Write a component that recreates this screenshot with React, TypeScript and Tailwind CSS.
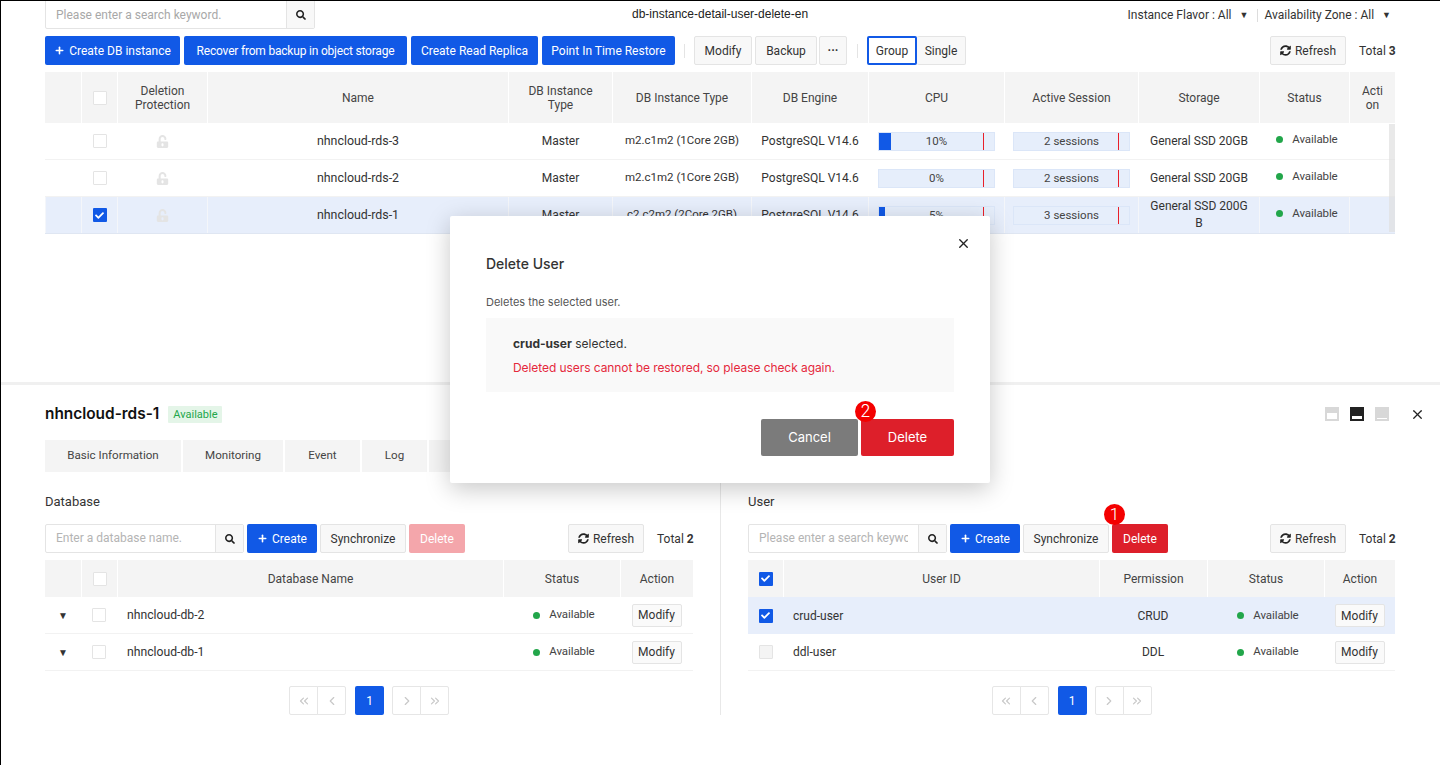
import { ChevronLeft, ChevronRight, ChevronsLeft, ChevronsRight, Plus, X } from "lucide-react";
import { FaCheck, FaSearch, FaSyncAlt, FaUnlockAlt } from "react-icons/fa";

function Btn({ children, className = "" }: any) {
  return (
    <button className={"flex h-[29px] items-center justify-center rounded-[2px] border border-[#e4e4e4] bg-[#f8f8f8] text-[12px] text-[#333] " + className}>
      {children}
    </button>
  );
}

function Blue({ children, className = "" }: any) {
  return (
    <button className={"flex h-[29px] items-center justify-center rounded-[2px] bg-[#1159e6] text-[12px] text-white " + className}>
      {children}
    </button>
  );
}

function Box({ on = false, dim = false }: any) {
  if (on) {
    return (
      <span className="flex h-[14px] w-[14px] items-center justify-center rounded-[1px] bg-[#1159e6]">
        <FaCheck size={9} className="text-white" />
      </span>
    );
  }
  return <span className={"block h-[14px] w-[14px] rounded-[1px] border border-[#e4e4e4] " + (dim ? "bg-[#f4f4f4]" : "bg-white")} />;
}

function Status({ className = "" }: any) {
  return (
    <span className={"flex items-center gap-[9px] pl-[5px] text-[11.5px] tracking-[-0.1px] text-[#444] " + className}>
      <span className="h-[7px] w-[7px] rounded-full bg-[#22a64a]" />
      Available
    </span>
  );
}

function Bar({ label, pct }: any) {
  return (
    <div className="relative mt-px flex h-[19px] w-[117px] items-center justify-center border border-[#dbe6f8] bg-[#e6eefb] text-[11.5px] text-[#444]">
      <div className="absolute bottom-0 left-0 top-0 bg-[#1159e6]" style={{ width: pct + "%" }} />
      <div className="absolute bottom-0 left-[104px] top-0 w-px bg-[#e8202a]" />
      <span className="relative">{label}</span>
    </div>
  );
}

const topCols = "grid-cols-[36px_36px_90px_301px_104px_139px_117px_136px_134px_121px_90px_46px]";

function InstanceRow({ name, flavor, cpu, pct, sessions, storage, selected }: any) {
  const cell = "flex h-full items-center justify-center border-l " + (selected ? "border-[#f4f6fa]" : "border-transparent");
  return (
    <div className={"grid h-[37px] items-center border-b text-[12px] text-[#333] " + topCols + " " + (selected ? "border-[#dfe6f2] bg-[#e7eefb]" : "border-[#f2f2f2]")}>
      <div className={cell} />
      <div className={cell}><Box on={selected} /></div>
      <div className={cell}><FaUnlockAlt size={13} className="text-[#e4e4e4]" /></div>
      <div className={cell + " text-[12.4px]"}>{name}</div>
      <div className={cell}>Master</div>
      <div className={cell + " text-[11.5px]"}>{flavor}</div>
      <div className={cell}>PostgreSQL V14.6</div>
      <div className={cell}><Bar label={cpu} pct={pct} /></div>
      <div className={cell}><Bar label={sessions} pct={0} /></div>
      <div className={cell + " text-center leading-[17px]"}>{storage}</div>
      <div className={cell}><Status className="-mt-[3px]" /></div>
      <div className={cell} />
    </div>
  );
}

function Pager() {
  const item = "flex h-[29px] w-[29px] items-center justify-center border border-[#e6e6e6] text-[#c8c8c8]";
  return (
    <div className="mt-[15px] flex justify-center">
      <div className="flex">
        <span className={item + " rounded-l-[2px]"}><ChevronsLeft size={14} /></span>
        <span className={item + " -ml-px rounded-r-[2px]"}><ChevronLeft size={14} /></span>
      </div>
      <span className="ml-[9px] mr-[8px] flex h-[29px] w-[29px] items-center justify-center rounded-[2px] bg-[#1159e6] text-[12px] text-white">1</span>
      <div className="flex">
        <span className={item + " rounded-l-[2px]"}><ChevronRight size={14} /></span>
        <span className={item + " -ml-px rounded-r-[2px]"}><ChevronsRight size={14} /></span>
      </div>
    </div>
  );
}

function SearchBox({ placeholder, width }: any) {
  return (
    <div className={"flex h-[29px] rounded-[2px] border border-[#e4e4e4] " + width}>
      <span className="min-w-0 flex-1 pl-[10px] pr-[10px]">
        <span className="block overflow-hidden whitespace-nowrap text-[12px] leading-[27px] text-[#b4b4b4]">{placeholder}</span>
      </span>
      <span className="flex w-[28px] items-center justify-center border-l border-[#e4e4e4] bg-[#f8f8f8]">
        <FaSearch size={10} className="text-[#222]" />
      </span>
    </div>
  );
}

function Refresh() {
  return (
    <Btn className="ml-auto w-[76px]"><FaSyncAlt size={11} className="mr-[4px] text-[#222]" />Refresh</Btn>
  );
}

function Toolbar({ placeholder, deleteClass, children }: any) {
  return (
    <div className="flex items-center">
      <SearchBox placeholder={placeholder} width="w-[199px]" />
      <Blue className="ml-[3px] w-[70px]"><Plus size={11} strokeWidth={3.5} className="mr-[4px]" />Create</Blue>
      <Btn className="ml-[3px] w-[86px]">Synchronize</Btn>
      <button className={"relative ml-[3px] h-[29px] w-[56px] rounded-[2px] text-[12px] text-white " + deleteClass}>
        Delete
        {children}
      </button>
      <Refresh />
      <span className="ml-[13px] w-[36px] whitespace-nowrap text-right text-[12px] text-[#333]">Total <b>2</b></span>
    </div>
  );
}

function Marker({ n, className }: any) {
  return (
    <span className={"absolute flex h-[21px] w-[21px] items-center justify-center rounded-full bg-[#f40000] text-[17px] font-light text-white " + className}>{n}</span>
  );
}

function Modify() {
  return (
    <button className="h-[23px] w-[50px] rounded-[2px] border border-[#e4e4e4] bg-[#fafafa] text-[12px] text-[#333]">Modify</button>
  );
}

function Head({ children, className = "" }: any) {
  return <div className={"flex h-full items-center justify-center border-l border-white bg-[#f4f4f4] text-center text-[12px] leading-[14px] text-[#444] " + className}>{children}</div>;
}

function Tile({ tile, inner }: any) {
  return (
    <span className={"flex h-[14px] w-[14px] flex-col justify-end px-[2px] pb-[2px] " + tile}>
      <span className={"block bg-white " + inner} />
    </span>
  );
}

const dbCols = "grid-cols-[36px_36px_386px_117px_73px]";
const userCols = "grid-cols-[35px_316px_108px_117px_71px]";

export default function App() {
  return (
    <div className="relative h-[765px] w-[1440px] overflow-hidden border-l border-t border-black bg-white font-['Roboto',sans-serif]">
      {/* top list */}
      <div className="h-[381px] pl-[44px] pr-[45px]">
        <div className="flex h-[28px] items-start">
          <div className="-mt-px flex h-[29px] w-[270px] rounded-b-[2px] border border-[#e4e4e4]">
            <span className="flex-1 pl-[10px] text-[12px] leading-[29px] text-[#a8a8a8]">Please enter a search keyword.</span>
            <span className="flex w-[28px] items-center justify-center border-l border-[#e4e4e4] bg-[#f8f8f8]">
              <FaSearch size={10} className="text-[#222]" />
            </span>
          </div>
          <span className="ml-[317px] font-['Liberation_Sans',sans-serif] text-[12px] leading-[27px] text-[#222]">db-instance-detail-user-delete-en</span>
          <div className="ml-auto flex items-center text-[12px] leading-[29px] text-[#333]">
            <span>Instance Flavor : All</span>
            <span className="ml-[8px] text-[9px]">▼</span>
            <span className="ml-[9px] mr-[6px] h-[13px] w-px bg-[#ddd]" />
            <span>Availability Zone : All</span>
            <span className="ml-[8px] mr-[4px] text-[9px]">▼</span>
          </div>
        </div>

        <div className="mt-[7px] flex items-center">
          <Blue className="w-[135px]"><Plus size={11} strokeWidth={3.5} className="mr-[4px]" />Create DB instance</Blue>
          <Blue className="ml-[4px] w-[223px] tracking-[-0.2px]">Recover from backup in object storage</Blue>
          <Blue className="ml-[4px] w-[127px]">Create Read Replica</Blue>
          <Blue className="ml-[4px] w-[133px]">Point In Time Restore</Blue>
          <span className="mx-[9px] h-[14px] w-px bg-[#e4e4e4]" />
          <Btn className="w-[58px]">Modify</Btn>
          <Btn className="ml-[3px] w-[62px]">Backup</Btn>
          <Btn className="ml-[2px] w-[28px] font-bold">···</Btn>
          <span className="ml-[10px] mr-[9px] h-[14px] w-px bg-[#e4e4e4]" />
          <button className="h-[29px] w-[50px] rounded-[2px] border-2 border-[#1159e6] text-[12px] text-[#333]">Group</button>
          <Btn className="w-[49px] border-l-0">Single</Btn>
          <Refresh />
          <span className="ml-[13px] w-[36px] whitespace-nowrap text-right text-[12px] text-[#333]">Total <b>3</b></span>
        </div>

        <div className="relative mt-[7px]">
          <div className={"grid h-[51px] items-center " + topCols}>
            <Head className="border-l-0" />
            <Head><Box /></Head>
            <Head>Deletion<br />Protection</Head>
            <Head>Name</Head>
            <Head>DB Instance<br />Type</Head>
            <Head>DB Instance Type</Head>
            <Head>DB Engine</Head>
            <Head>CPU</Head>
            <Head>Active Session</Head>
            <Head>Storage</Head>
            <Head>Status</Head>
            <Head>Acti<br />on</Head>
          </div>
          <InstanceRow name="nhncloud-rds-3" flavor="m2.c1m2 (1Core 2GB)" cpu="10%" pct={10} sessions="2 sessions" storage="General SSD 20GB" />
          <InstanceRow name="nhncloud-rds-2" flavor="m2.c1m2 (1Core 2GB)" cpu="0%" pct={0} sessions="2 sessions" storage="General SSD 20GB" />
          <InstanceRow selected name="nhncloud-rds-1" flavor="c2.c2m2 (2Core 2GB)" cpu="5%" pct={5} sessions="3 sessions" storage={<>General SSD 200G<br />B</>} />
          <span className="absolute bottom-[2px] right-0 top-[52px] w-[6px] bg-[#e0e0e0]/70" />
        </div>
      </div>

      {/* detail panel */}
      <div className="border-t-[3px] border-[#f0f0f0] pl-[44px] pr-[45px]">
        <div className="mt-[18px] flex h-[22px] items-center">
          <span className="font-['Inter',sans-serif] text-[15.4px] font-semibold text-[#111]">nhncloud-rds-1</span>
          <span className="ml-[9px] rounded-[1px] bg-[#e4f5e8] px-[5px] text-[11px] leading-[17px] text-[#22a64a]">Available</span>
          <div className="ml-auto flex items-center">
            <Tile tile="bg-[#d8d8d8]" inner="h-[6px] w-full" />
            <span className="ml-[11px]"><Tile tile="bg-[#222]" inner="h-[3px] w-full" /></span>
            <span className="ml-[11px]"><Tile tile="bg-[#d8d8d8]" inner="h-px w-full" /></span>
            <X size={15} strokeWidth={2} className="ml-[21px] mr-[-30px] text-[#222]" />
          </div>
        </div>

        <div className="mt-[15px] flex h-[32px] gap-[2px] text-[11.6px] text-[#444]">
          <span className="flex w-[136px] items-center justify-center bg-[#f4f4f4]">Basic Information</span>
          <span className="flex w-[100px] items-center justify-center bg-[#f4f4f4]">Monitoring</span>
          <span className="flex w-[75px] items-center justify-center bg-[#f4f4f4]">Event</span>
          <span className="flex w-[65px] items-center justify-center bg-[#f4f4f4]">Log</span>
          <span className="w-[40px] bg-[#f4f4f4]" />
        </div>

        <div className="mt-[21px] grid grid-cols-[648px_647px] gap-[55px]">
          <div>
            <div className="text-[13px] leading-[18px] text-[#333]">Database</div>
            <div className="mt-[13px]">
              <Toolbar placeholder="Enter a database name." deleteClass="bg-[#f4a6ab]" />
            </div>
            <div className={"mt-[7px] grid h-[37px] " + dbCols}>
              <Head className="border-l-0" />
              <Head><Box /></Head>
              <Head>Database Name</Head>
              <Head>Status</Head>
              <Head>Action</Head>
            </div>
            {["nhncloud-db-2", "nhncloud-db-1"].map((n) => (
              <div key={n} className={"grid h-[37px] items-center border-b border-[#f2f2f2] text-[12px] text-[#333] " + dbCols}>
                <span className="flex justify-center text-[10px]">▼</span>
                <span className="flex justify-center"><Box /></span>
                <span className="pl-[10px] text-[12.2px]">{n}</span>
                <span className="flex justify-center"><Status /></span>
                <span className="flex justify-center"><Modify /></span>
              </div>
            ))}
            <Pager />
          </div>

          <div className="relative">
            <div className="text-[13px] leading-[18px] text-[#333]">User</div>
            <div className="mt-[13px]">
              <Toolbar placeholder="Please enter a search keyword." deleteClass="bg-[#dd1f2a]">
                <Marker n="1" className="-left-[8px] -top-[20px]" />
              </Toolbar>
            </div>
            <div className={"mt-[7px] grid h-[37px] " + userCols}>
              <Head className="border-l-0"><Box on /></Head>
              <Head>User ID</Head>
              <Head>Permission</Head>
              <Head>Status</Head>
              <Head>Action</Head>
            </div>
            <div className={"grid h-[37px] items-center bg-[#e7eefb] text-[12px] text-[#333] " + userCols}>
              <span className="flex justify-center"><Box on /></span>
              <span className="pl-[10px]">crud-user</span>
              <span className="text-center">CRUD</span>
              <span className="flex justify-center"><Status /></span>
              <span className="flex justify-center"><Modify /></span>
            </div>
            <div className={"grid h-[37px] items-center border-b border-[#f2f2f2] text-[12px] text-[#333] " + userCols}>
              <span className="flex justify-center"><Box dim /></span>
              <span className="pl-[10px]">ddl-user</span>
              <span className="text-center">DDL</span>
              <span className="flex justify-center"><Status /></span>
              <span className="flex justify-center"><Modify /></span>
            </div>
            <Pager />
            <span className="absolute -left-[28px] bottom-0 top-[-41px] w-px bg-[#e8e8e8]" />
          </div>
        </div>
      </div>

      {/* modal */}
      <div className="absolute left-[449px] top-[215px] h-[267px] w-[540px] rounded-[2px] bg-white px-[36px] font-['Inter',sans-serif] shadow-[0_6px_24px_rgba(0,0,0,0.22)]">
        <X size={15} strokeWidth={2.2} className="absolute right-[19px] top-[20px] text-[#222]" />
        <div className="mt-[38px] text-[14px] font-medium leading-[20px] text-[#333]">Delete User</div>
        <div className="mt-[20px] text-[11px] leading-[16px] text-[#555]">Deletes the selected user.</div>
        <div className="mt-[8px] h-[74px] bg-[#f9f9f9] px-[27px] pt-[14px] text-[12px] leading-[24px]">
          <div className="text-[#333]"><b>crud-user</b> selected.</div>
          <div className="tracking-[-0.07px] text-[#e5283c]">Deleted users cannot be restored, so please check again.</div>
        </div>
        <div className="relative mt-[27px] flex justify-end gap-[3px]">
          <button className="h-[37px] w-[97px] rounded-[2px] bg-[#7b7b7b] text-[13px] text-white">Cancel</button>
          <button className="h-[37px] w-[93px] rounded-[2px] bg-[#dd1f2a] text-[13px] text-white">Delete</button>
          <Marker n="2" className="right-[78px] -top-[18px]" />
        </div>
      </div>
    </div>
  );
}
